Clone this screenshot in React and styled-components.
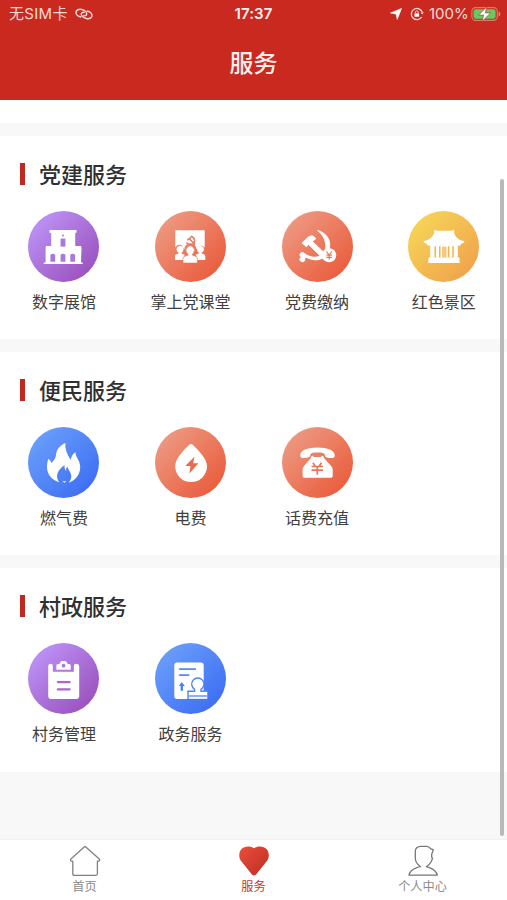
import React from "react";
import styled, { createGlobalStyle } from "styled-components";

const COLOR = {
  RED: "#c9291f",
  TEXT: "#303030",
  GRAY: "#8a8a8a",
  BACKGROUND: "#f8f8f8",
  PURPLE: ["#bd93f6", "#9a50bd"],
  ORANGE: ["#ed9a83", "#ea5b3b"],
  YELLOW: ["#f6d657", "#f0a24c"],
  BLUE: ["#6b9ffb", "#3c6df3"],
};

const MuseumIcon = () => (
  <Glyph>
    <path d="M21.5 19h27v2.6l-1.3.6V35H53l.5 1.5-.5 14.7 1.7.6V53H15.8v-1.2l1.8-.6V36.5L18 35h5.2V22.2l-1.7-.6z" />
    <g fill="#aa78dc">
      <rect x="32.6" y="27.6" width="4.8" height="8" />
      <circle cx="35" cy="24.6" r="1" />
      <path d="M22.4 43.7q2.4-1.8 4.8 0v7h-4.8zM32.6 43.7q2.4-1.8 4.8 0v7h-4.8zM42.3 43.7q2.4-1.8 4.8 0v7h-4.8z" />
    </g>
  </Glyph>
);

const ClassroomIcon = () => (
  <Glyph>
    <path d="M20.3 19.3h29.4v17.2a4 4 0 0 0-6.8.5l-1.5 1.2a6 6 0 0 0-12 0L28 37a4 4 0 0 0-7.7-.5z" />
    <g stroke="#e87a5d" fill="none" strokeWidth="1.5" strokeLinecap="round">
      <path d="M36.4 25.2c4 1.8 4.3 7 .4 8.200-2 .5-3.8-.3-5-1.4M32.800 28.800l3-2.400M34.6 28l5 5.2" />
    </g>
    <circle cx="25" cy="38.3" r="3.4" />
    <circle cx="45.5" cy="38.3" r="3.4" />
    <path d="M20 49v-4.2q0-1.2 2-1.7l1.6-.5v-2h3v2l3 1.2-1.5 5.2zM50.3 49v-4.2q0-1.2-2-1.7l-1.600-.5v-2h-3v2l-3 1.2 1.5 5.2z" />
    <path
      d="M28 52v-4.8q0-1.6 2.6-2.3l2.6-.8-1.200-2.200a4.200 4.200 0 1 1 6.400 0l-1.200 2.200 2.600.8q2.600.7 2.600 2.300V52z"
      stroke="#e97657"
      strokeWidth=".6"
    />
  </Glyph>
);

const PartyFeeIcon = () => (
  <Glyph>
    <g stroke="#fff" strokeWidth=".9" strokeLinejoin="round">
      <path d="M35.6 19.6c5.8 1.2 11.3 6 12 12.3.8 7.4-3.3 14.4-9.6 16.4-4.8 1.4-9.8.1-14.2-2.3-.7 1-1.2 1.6-1.1 2.7.1 1.7-1.2 2.2-2.6 1.9-1.5-.3-2.6-1-2.2-2.8.2-.8.9-1.3 1.7-1.5-2.2-1.2-2.2-3.7-.4-4.6 1.2-.5 2.4.2 3.6 1 4.6 3.4 9.9 4.5 14.5 2.5 4.7-2 7.4-7.3 6.2-13.4-.8-4.9-3.7-8.9-7.9-12.2z" />
      <path d="M20 31.9l6.8-6.2q2-1 4.1-.8l3.1 2.7-3.7 2.7L46 45.4l-3.7 3.5-15.600-15.400-2.300 2.200z" />
    </g>
    <circle cx="47.2" cy="44.3" r="7" />
    <path
      d="M44.5 40.5l2.7 3.5 2.7-3.5M44.4 44.2h5.600M44.4 46.4h5.600M47.2 44v4.500"
      fill="none"
      stroke="#e97558"
      strokeWidth="1.2"
    />
  </Glyph>
);

const TempleIcon = () => (
  <Glyph>
    <path d="M26.2 18.7q2 1.3 4 1.1h12q2 .2 4-1.1v3.6c1.6 4.5 5 7 10 7.8v1.4l-2.8 1.2-1.4 2.1-2.2-.4v12l1.7.3V51l.4 1H20l.4-1v-4.3l1.8-.3v-12l-2.2.4-1.5-2.1-2.8-1.2v-1.4c5-.8 8.500-3.300 10.500-7.800z" />
    <path
      d="M27.2 35.3v11.2M45 35.3v11.2M31.8 35.3v11.2M40.6 35.3v11.2"
      stroke="#f2b34e"
      strokeWidth="1.5"
    />
    <rect x="34.1" y="35.7" width="4.4" height="10.8" fill="#f5c67c" />
  </Glyph>
);

const FlameIcon = () => (
  <Glyph>
    <path d="M37.4 16c-.5 6.8 2 11.3 5.2 16.8 1-2.8 1.6-5.8 4.9-7.5-.4 4.4 4.7 7.7 4.7 14.8 0 8.2-5.2 13.5-11.6 15.6 1.6-1.7 2.7-3.8 2.7-6.2 0-4.2-3-5.9-3.8-9.7-1.3 1-1.6 2.4-1.4 4.2-1.3-1.6-1.8-3.5-1.6-6-3.9 3-7.4 6.6-7.4 11.4 0 2.6 1.1 4.6 2.6 6.1C24.6 53.6 19 48 19 40.3c0-3.4.4-6 1.4-8.5 1.4 1.1 2.5 2.5 3.2 4.3 2-2.6 4.1-4.5 4.5-8.7.5-5.3 4.3-9.3 9.3-11.4z" />
    <path d="M34.3 54.2h4.2l-2.1 1.6z" />
  </Glyph>
);

const PowerIcon = () => (
  <Glyph>
    <path d="M34.5 17.5q1.5-1.2 3 0C43 23 52 31.2 52 39.2a15.9 15.9 0 0 1-31.8 0c0-8 8.7-16.2 14.3-21.7z" />
    <path d="M39.4 29.8L30.2 39h5.3l-1.1 7.6 9-10.4h-5.2z" fill="#e96c4d" />
  </Glyph>
);

const PhoneIcon = () => (
  <Glyph>
    <path d="M18.2 28.4c.2-5.2 6.6-8 17.2-8s17.2 2.8 17.4 8c.1 2.2-1.6 2.7-4.4 2.6-3.2-.1-5.6-.7-5.6-3-.1-2-2.6-2.5-7.3-2.5s-7 .6-7.2 2.5c-.1 2.3-2.8 2.9-5.9 3-2.5.1-4.3-.4-4.2-2.6z" />
    <path d="M30 28.9q1.5-.4 1.5 1h7.7q0-1.4 1.5-1 1.3.2 1.2 2.1l6.9 7.4q1.9 2.1 1.9 4.5v6.2q0 1.7-1.7 1.7H22.3q-1.7 0-1.7-1.7v-6.2q0-2.4 1.8-4.5l6.5-7.4q-.2-1.9 1.1-2.1z" />
    <path
      d="M31 35.8l2 3.2M39.4 35.8l-2 3.2M29.5 39.5h11.6M29.5 43.1h11.6M35.3 39.5v8.3"
      fill="none"
      stroke="#e97558"
      strokeWidth="1.7"
    />
  </Glyph>
);

const ClipboardIcon = () => (
  <Glyph>
    <path d="M22.5 20.7q2.3 0 2.3 1.8v6.3h21v-6.3q0-1.8 2.3-1.8 3.1 0 3.1 3v29.2q0 3-3 3h-25q-3 0-3-3V23.7q0-3 2.3-3z" />
    <path d="M28.3 26.8v-4.1q0-1.5 1.7-1.6h1.4l1.1-2q.6-1 1.7-1h2.7q1.1 0 1.7 1l1.1 2h1.4q1.7.1 1.7 1.6v4.1z" />
    <circle cx="35.5" cy="22.7" r="1.9" fill="#ae78dd" />
    <path
      d="M29.9 39.1h11.7M29.9 46.4h11.7"
      stroke="#aa68cd"
      strokeWidth="2.3"
      strokeLinecap="round"
    />
  </Glyph>
);

const StampIcon = () => (
  <Glyph>
    <path d="M22.3 19.4h23.5q2.9 0 2.9 2.900V56H22.300q-3 0-3-3V22.300q0-2.900 3-2.900z" />
    <path
      d="M24.7 26.1h15.6M24.7 32.1h8.9"
      stroke="#528af8"
      strokeWidth="1.8"
      strokeLinecap="round"
    />
    <path d="M26.8 39l3 4h-1.8v4.8h-2.4V43h-1.8z" fill="#4c81f7" />
    <path
      d="M39.600 46.300a6.100 6.100 0 1 1 6.400 0v2h6.200V57H33V48.300h6.600z"
      stroke="#4f83f7"
      strokeWidth="1.4"
    />
    <path d="M48.900 57V48.900h3.300V57z" />
    <path d="M33.700 53h18.600" stroke="#4f83f7" strokeWidth="1.300" />
    <path d="M32 56.600h21.500" stroke="#4677f5" strokeWidth="1.500" />
  </Glyph>
);

const SECTIONS = [
  {
    title: "党建服务",
    items: [
      { label: "数字展馆", color: COLOR.PURPLE, Icon: MuseumIcon },
      { label: "掌上党课堂", color: COLOR.ORANGE, Icon: ClassroomIcon },
      { label: "党费缴纳", color: COLOR.ORANGE, Icon: PartyFeeIcon },
      { label: "红色景区", color: COLOR.YELLOW, Icon: TempleIcon },
    ],
  },
  {
    title: "便民服务",
    items: [
      { label: "燃气费", color: COLOR.BLUE, Icon: FlameIcon },
      { label: "电费", color: COLOR.ORANGE, Icon: PowerIcon },
      { label: "话费充值", color: COLOR.ORANGE, Icon: PhoneIcon },
    ],
  },
  {
    title: "村政服务",
    items: [
      { label: "村务管理", color: COLOR.PURPLE, Icon: ClipboardIcon },
      { label: "政务服务", color: COLOR.BLUE, Icon: StampIcon },
    ],
  },
];

const StatusBar = () => (
  <StyledStatusBar>
    <StatusLeft>
      <Carrier>无SIM卡</Carrier>
      <svg width="18" height="12" viewBox="0 0 18 12" fill="none" stroke="#f8d9d5" strokeWidth="1.5">
        <path d="M6.400 9C3.500 8.600.900 6.700 1 4.400 1.200 1.800 4 .9 6.800 1.600c2.900.7 5.300 2.700 4.900 4.700-.3 1.300-1.900 1.600-3.400 1.200" />
        <path d="M11.600 3c2.900.4 5.500 2.300 5.400 4.600-.2 2.600-3 3.500-5.800 2.800C8.300 9.700 5.900 7.700 6.300 5.700c.3-1.300 1.900-1.600 3.400-1.200" />
      </svg>
    </StatusLeft>
    <Clock>17:37</Clock>
    <StatusRight>
      <svg width="12" height="12" viewBox="0 0 12 12" fill="#fff">
        <path d="M11.600.4L7.200 11.400 6 6 .4 5z" stroke="#fff" strokeWidth=".6" strokeLinejoin="round" />
      </svg>
      <LockSvg width="14" height="14" viewBox="0 0 14 14" fill="none" stroke="#f8d9d5" strokeWidth="1.3">
        <path d="M12.300 5.400A5.600 5.600 0 1 0 11.700 10" />
        <path d="M10.600 5.700l1.900 1.800 1.300-2.200z" fill="#f8d9d5" stroke="none" />
        <rect x="4.500" y="6.300" width="4.600" height="3.400" fill="#fff" stroke="none" />
        <path d="M5.400 6.500V5.300a1.400 1.400 0 0 1 2.800 0v1.200" strokeWidth="1" />
      </LockSvg>
      <Percent>100%</Percent>
      <svg width="30" height="16" viewBox="0 0 30 16">
        <rect x=".9" y="1.600" width="25.400" height="12.800" rx="3.800" fill="none" stroke="#d9806c" strokeWidth="1.100" />
        <rect x="2.600" y="3.300" width="22" height="9.400" rx="2.300" fill="#65c966" />
        <path d="M27.600 5.600q1.800.8 1.800 2.400t-1.800 2.400z" fill="#de8a78" />
        <path
          d="M15.700.9L7.600 9.100h5l-1.500 6.300L19.600 6.900h-5.200z"
          fill="#fff"
          stroke="#bf3a28"
          strokeWidth=".7"
        />
      </svg>
    </StatusRight>
  </StyledStatusBar>
);

const Service = ({ label, color, Icon }) => (
  <StyledService>
    <Circle $from={color[0]} $to={color[1]}>
      <Icon />
    </Circle>
    <Label>{label}</Label>
  </StyledService>
);

const Section = ({ title, items }) => (
  <StyledSection>
    <SectionTitle>
      <Mark />
      <TitleText>{title}</TitleText>
    </SectionTitle>
    <Grid>
      {items.map((item) => (
        <Service key={item.label} {...item} />
      ))}
    </Grid>
  </StyledSection>
);

const TabBar = () => (
  <StyledTabBar>
    <Tab>
      <svg width="32" height="32" viewBox="0 0 32 32" fill="none" stroke="#808080" strokeWidth="1.300" strokeLinejoin="round">
        <path d="M15.200 1.900q.8-.7 1.600 0L30.300 14q.7.700.3 1.500-.3.700-1.200.7h-1v12.600q0 1.500-1.500 1.500H5.300q-1.500 0-1.500-1.500V16.200h-1q-.9 0-1.200-.7-.4-.8.3-1.500z" />
      </svg>
      <TabText>首页</TabText>
    </Tab>
    <Tab $active>
      <svg width="32" height="32" viewBox="0 0 32 32">
        <defs>
          <linearGradient id="heart" x1="0" y1="0" x2="1" y2="1">
            <stop offset="0" stopColor="#e94f3d" />
            <stop offset="1" stopColor="#bd2d20" />
          </linearGradient>
        </defs>
        <path
          fill="url(#heart)"
          d="M16 3.300C19.500.6 25.500.7 28.700 4.300c2.900 3.500 2.600 8.900-.2 12.300L18.300 29.200q-2.300 2.500-4.600 0L3.500 16.600C.7 13.200.4 7.800 3.300 4.300 6.500.7 12.500.6 16 3.300z"
        />
      </svg>
      <TabText>服务</TabText>
    </Tab>
    <Tab>
      <svg width="32" height="32" viewBox="0 0 32 32" fill="none" stroke="#777" strokeWidth="1.300" strokeLinejoin="round">
        <path d="M13.600 21.700C10.700 19.800 8.500 16.700 8.300 13.200V6.300Q8.400 1.500 14 1.300h5.500q2.700 0 4.300 2.500l2.400.9-1.500 4.700v2.800l.8 1.200-1.200 3.100q-1.700 3.300-5 5.200 1.500.4 3.500 1.100 6.300 2.200 7.500 7.400H2q1-5.100 7.300-7.400 2.500-.9 4.300-1.100z" />
      </svg>
      <TabText>个人中心</TabText>
    </Tab>
  </StyledTabBar>
);

const App = () => {
  return (
    <Page>
      <GlobalStyle />
      <Header>
        <StatusBar />
        <Title>服务</Title>
      </Header>
      <Content>
        <Strip />
        {SECTIONS.map((section) => (
          <Section key={section.title} {...section} />
        ))}
        <Scrollbar />
      </Content>
      <TabBar />
    </Page>
  );
};
export default App;

const GlobalStyle = createGlobalStyle`
  * {
    box-sizing: border-box;
  }
  body {
    margin: 0;
    overflow: hidden;
    font-family: "Noto Sans CJK SC", sans-serif;
  }
`;

const Page = styled.div`
  display: flex;
  flex-direction: column;
  height: 900px;
  background-color: ${COLOR.BACKGROUND};
`;

const Header = styled.header`
  flex: none;
  height: 99.5px;
  background-color: ${COLOR.RED};
`;

const StyledStatusBar = styled.div`
  display: grid;
  grid-template-columns: 1fr auto 1fr;
  align-items: center;
  height: 28px;
  padding: 0 6px 0 9px;
  color: #f8d9d5;
  font-family: Inter, "Noto Sans CJK SC", sans-serif;
  font-size: 15px;
  line-height: 28px;
`;

const StatusLeft = styled.div`
  display: flex;
  align-items: center;
`;

const Carrier = styled.span`
  width: 66px;
  letter-spacing: 0.3px;
`;

const Clock = styled.span`
  margin-right: 3px;
  color: #fff1ef;
  font-weight: 600;
  letter-spacing: 0.1px;
`;

const StatusRight = styled.div`
  display: flex;
  align-items: center;
  justify-content: flex-end;
`;

const LockSvg = styled.svg`
  margin: 0 5px 0 8px;
`;

const Percent = styled.span`
  width: 42px;
`;

const Title = styled.h1`
  margin: 0;
  color: #ffeeec;
  font-size: 24px;
  font-weight: 500;
  line-height: 68px;
  text-align: center;
`;

const Content = styled.main`
  position: relative;
  display: flex;
  flex: 1;
  flex-direction: column;
  gap: 12.5px;
  min-height: 0;
`;

const Strip = styled.div`
  flex: none;
  height: 23.5px;
  background-color: #fff;
`;

const StyledSection = styled.section`
  flex: none;
  height: 203.7px;
  padding-top: 22px;
  background-color: #fff;
`;

const SectionTitle = styled.h2`
  display: flex;
  align-items: center;
  gap: 14px;
  height: 32px;
  margin: 0;
  padding-left: 20px;
`;

const Mark = styled.span`
  width: 5px;
  height: 22px;
  background-color: #c0291f;
`;

const TitleText = styled.span`
  padding-bottom: 2px;
  color: ${COLOR.TEXT};
  font-size: 22px;
  font-weight: 500;
  line-height: 30px;
`;

const Grid = styled.div`
  display: grid;
  grid-template-columns: repeat(4, 126.6px);
  margin-top: 21px;
  padding-left: 0.6px;
`;

const StyledService = styled.div`
  display: flex;
  flex-direction: column;
  align-items: center;
`;

const Circle = styled.div`
  width: 71px;
  height: 71px;
  border-radius: 50%;
  background: linear-gradient(135deg, ${({ $from }) => $from} 10%, ${({ $to }) => $to} 90%);
`;

const Glyph = styled.svg.attrs({ viewBox: "0 0 71 71" })`
  display: block;
  width: 71px;
  height: 71px;
  fill: #fff;
`;

const Label = styled.div`
  margin-top: 7px;
  color: #404040;
  font-size: 16px;
  line-height: 24px;
`;

const Scrollbar = styled.div`
  position: absolute;
  top: 79px;
  right: 3.5px;
  width: 4px;
  height: 657px;
  border-radius: 2px;
  background-color: #b9b9b9;
`;

const StyledTabBar = styled.nav`
  display: grid;
  flex: none;
  grid-template-columns: repeat(3, 1fr);
  height: 61px;
  border-top: 1px solid #f2f2f2;
  background-color: #fff;
`;

const Tab = styled.div`
  display: flex;
  flex-direction: column;
  align-items: center;
  padding-top: 5px;
  color: ${({ $active }) => ($active ? "#c33a30" : COLOR.GRAY)};
`;

const TabText = styled.span`
  margin-top: 1px;
  font-size: 12.2px;
  line-height: 17px;
`;
